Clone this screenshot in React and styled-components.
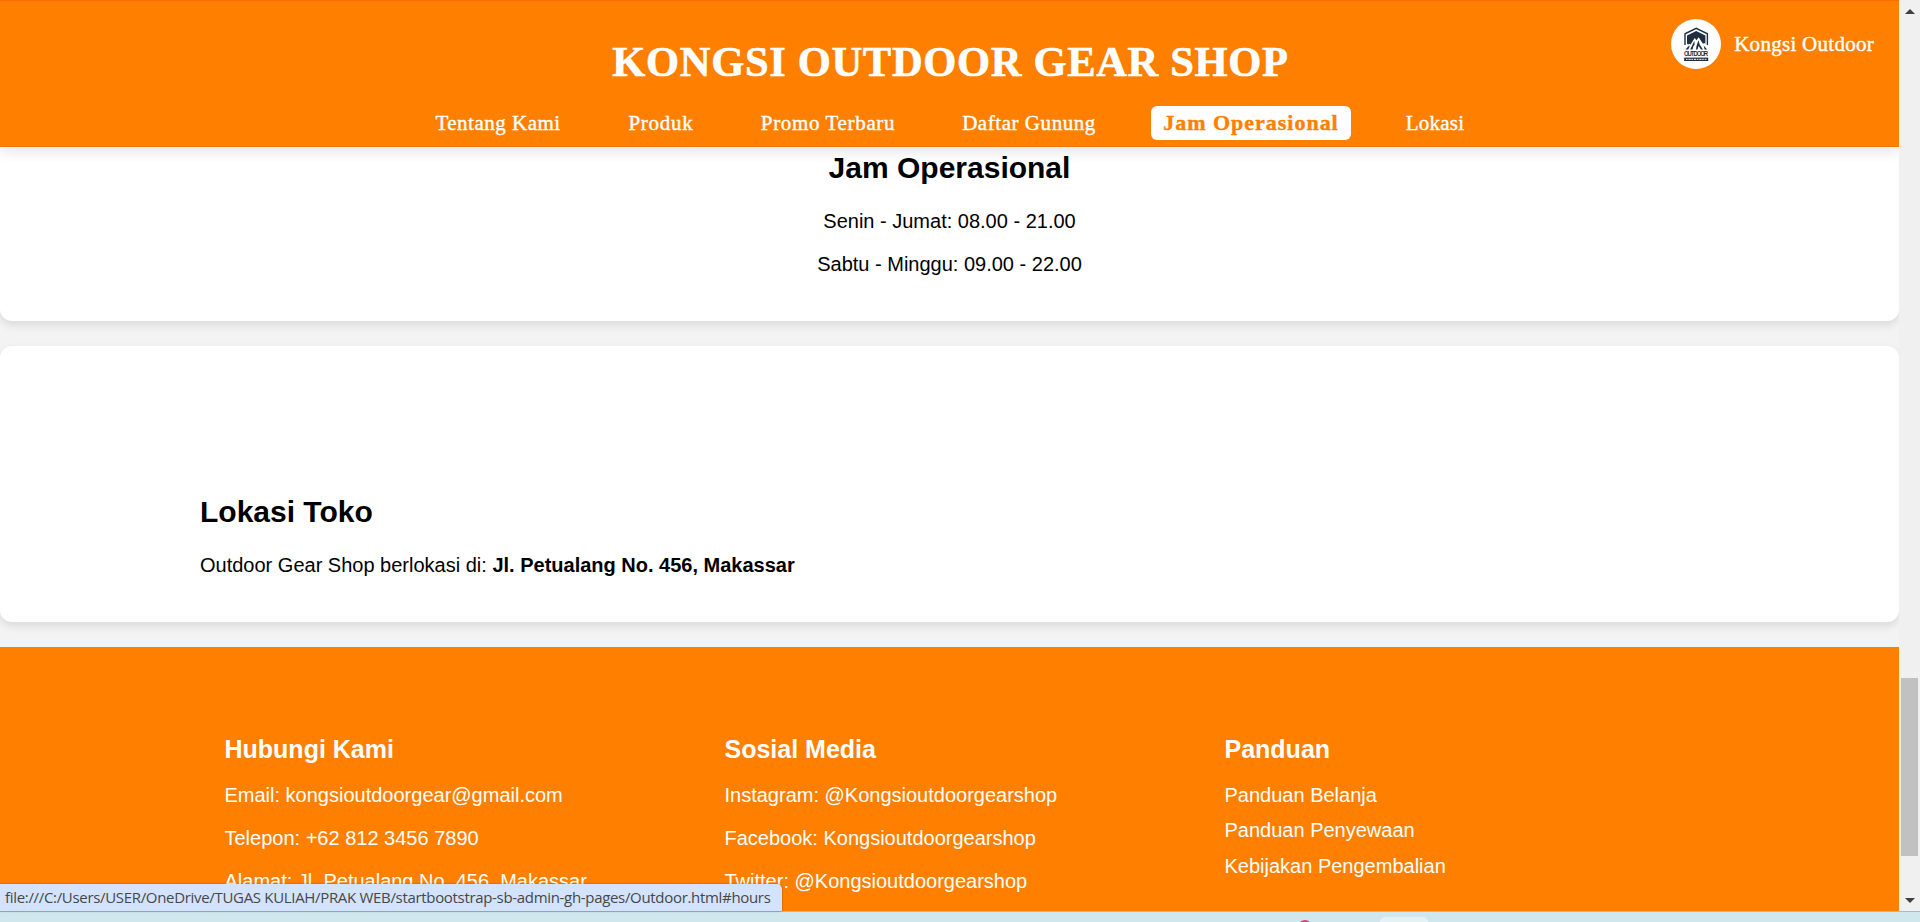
import React from "react";
import styled, { createGlobalStyle } from "styled-components";

const GlobalStyle = createGlobalStyle`
  * { box-sizing: border-box; margin: 0; padding: 0; }
  body { background: #f3f3f3; font-family: "Liberation Sans", Arial, sans-serif; overflow: hidden; }
`;

const Screen = styled.div`
  width: 1920px;
  height: 922px;
  display: flex;
  flex-direction: column;
  overflow: hidden;
`;

const Viewport = styled.div`
  position: relative;
  display: flex;
  height: 911px;
  flex: none;
`;

const Page = styled.div`
  width: 1899px;
  height: 911px;
  overflow: hidden;
  display: flex;
  flex-direction: column;
  background: #f3f3f3;
  color: #000;
  font-size: 20px;
  line-height: 23px;
`;

const Header = styled.header`
  position: relative;
  z-index: 1;
  flex: none;
  height: 147px;
  background: #ff8000;
  border-top: 1px solid #ff6a00;
  border-bottom: 1px solid #f57600;
  box-shadow: 0 5px 12px rgba(0, 0, 0, 0.1);
  color: #fff;
  font-family: Georgia, "Liberation Serif", serif;
  display: flex;
  flex-direction: column;
  align-items: center;
`;

const Title = styled.h1`
  margin-top: 37px;
  padding-left: 2px;
  font-size: 42.5px;
  line-height: 48px;
  letter-spacing: 0.68px;
  white-space: nowrap;
  -webkit-text-stroke: 0.6px currentColor;
`;

const Nav = styled.nav`
  display: flex;
  gap: 43px;
  margin-top: 20px;
`;

const NavLink = styled.a`
  width: ${(p) => p.$width}px;
  height: 34px;
  border-radius: 6px;
  text-align: center;
  white-space: nowrap;
  font-size: ${(p) => (p.$active ? 22 : 21)}px;
  line-height: 34px;
  letter-spacing: ${(p) => p.$tracking}px;
  font-weight: ${(p) => (p.$active ? 700 : 400)};
  background: ${(p) => (p.$active ? "#fff" : "transparent")};
  color: ${(p) => (p.$active ? "#ff8000" : "#fff")};
  -webkit-text-stroke: 0.4px currentColor;
`;

const Account = styled.div`
  position: absolute;
  top: 18px;
  right: 25px;
  display: flex;
  align-items: center;
  gap: 13px;
  font-size: 21px;
  letter-spacing: 0.28px;
  white-space: nowrap;
  -webkit-text-stroke: 0.4px currentColor;
`;

const Avatar = styled.span`
  width: 50px;
  height: 50px;
  border-radius: 50%;
  background: #fff;
  letter-spacing: 0;
  line-height: 0;
  -webkit-text-stroke: 0;
`;

const Card = styled.section`
  flex: none;
  background: #fff;
  box-shadow: 0 4px 8px rgba(0, 0, 0, 0.1);
  padding: ${(p) => p.$top}px 200px 45px;
  border-radius: ${(p) => (p.$cut ? "0 0 12px 12px" : "12px")};
  text-align: ${(p) => (p.$center ? "center" : "left")};
  margin-bottom: 25px;
`;

const Heading = styled.h2`
  font-size: 30px;
  line-height: 34px;
  margin-bottom: 25px;
`;

const Text = styled.p`
  & + & { margin-top: 20px; }
`;

const Footer = styled.footer`
  flex: 1;
  background: #ff8000;
  color: #fff;
  padding: 88px 0 0 224.5px;
  display: grid;
  grid-template-columns: repeat(3, 500px);
`;

const FooterTitle = styled.h3`
  font-size: 25px;
  line-height: 28px;
  margin-bottom: 21px;
`;

const LinkList = styled.ul`
  list-style: none;
`;

const LinkItem = styled.li`
  height: 35.4px;
`;

const Scrollbar = styled.div`
  width: 21px;
  background: #f0f0f0;
  display: flex;
  flex-direction: column;
  align-items: center;
  padding: 9px 0;
`;

const Arrow = styled.svg`
  display: block;
  flex: none;
  width: 10px;
  height: 5px;
`;

const Thumb = styled.div`
  width: 17px;
  height: 178px;
  margin: 664px 0 42px;
  background: #c1c1c1;
  flex: none;
`;

const StatusBubble = styled.div`
  position: absolute;
  left: 0;
  bottom: 0;
  width: 782px;
  height: 27px;
  padding-left: 5px;
  border-top-right-radius: 5px;
  background: #d3e3fd;
  box-shadow: 0 0 2px rgba(0, 0, 0, 0.45);
  color: #474747;
  font: 15px/26px "Open Sans", sans-serif;
  letter-spacing: -0.32px;
  white-space: nowrap;
`;

const Taskbar = styled.div`
  height: 11px;
  background: #cfe7ed;
  border-top: 1px solid #a9bac2;
  display: flex;
  padding-left: 1298px;
`;

const TaskIcon = styled.span`
  width: 14px;
  height: 14px;
  margin-top: 8px;
  border-radius: 50%;
  background: #d6457c;
`;

const TaskTile = styled.span`
  width: 48px;
  height: 20px;
  margin: 5px 0 0 68px;
  border-radius: 5px;
  background: #e4f2f5;
`;

const links = [
  { label: "Tentang Kami", width: 150, tracking: 0.5 },
  { label: "Produk", width: 90, tracking: 0.75 },
  { label: "Promo Terbaru", width: 158, tracking: 0.65 },
  { label: "Daftar Gunung", width: 158, tracking: 0.55 },
  { label: "Jam Operasional", width: 200, tracking: 0.98, active: true },
  { label: "Lokasi", width: 82, tracking: 0.2 },
];

function Logo() {
  return (
    <svg width="50" height="50" viewBox="0 0 50 50">
      <path d="M14 26V14.8L25.2 9.4 36.4 14.8V26" fill="none" stroke="#1f2f40" strokeWidth="1.4" />
      <path d="M16 24.5V16.4l9.2-4.3 9.2 4.3v8.1l-2.4 2H18z" fill="#1f2f40" />
      <path d="M12.5 31.2L18 24.8l1.6.6 4-6.4 2 2.2 2-3 4.4 6.6 1.5-.8 4.5 7.2z" fill="#fff" />
      <path d="M14.4 30.4l3.8-4 .4 1.2-1.4 2.8zM19.2 30.4l4.2-8.6.2 4-1.2 1.4-.8 3.2zM25 30.4l.4-3.2 2-6 1.4 4.6 3.2 4.6h-2l-2.4-3.4-1.2 3.4zM32.6 26.6l3.6 3.8h-2.6z" fill="#1f2f40" />
      <text x="13" y="37" textLength="24.2" lengthAdjust="spacing" fontFamily="Liberation Sans Narrow, Liberation Sans, sans-serif" fontWeight="700" fontSize="6" fill="#1f2f40" transform="translate(0 -9.25) scale(1 1.25)">OUTDOOR</text>
      <rect x="13.2" y="38.6" width="24" height="3.4" fill="#1f2f40" />
      <path d="M15 40.3h20.4" stroke="#fff" strokeWidth="1" strokeDasharray="1.6 .8 2.3 .7" />
    </svg>
  );
}

export default function App() {
  return (
    <Screen>
      <GlobalStyle />
      <Viewport>
        <Page>
          <Header>
            <Title>KONGSI OUTDOOR GEAR SHOP</Title>
            <Nav>
              {links.map((l) => (
                <NavLink key={l.label} $width={l.width} $tracking={l.tracking} $active={l.active}>
                  {l.label}
                </NavLink>
              ))}
            </Nav>
            <Account>
              <Avatar><Logo /></Avatar>
              Kongsi Outdoor
            </Account>
          </Header>
          <Card $top={4} $center $cut>
            <Heading>Jam Operasional</Heading>
            <Text>Senin - Jumat: 08.00 - 21.00</Text>
            <Text>Sabtu - Minggu: 09.00 - 22.00</Text>
          </Card>
          <Card $top={149}>
            <Heading>Lokasi Toko</Heading>
            <Text>Outdoor Gear Shop berlokasi di: <b>Jl. Petualang No. 456, Makassar</b></Text>
          </Card>
          <Footer>
            <div>
              <FooterTitle>Hubungi Kami</FooterTitle>
              <Text>Email: kongsioutdoorgear@gmail.com</Text>
              <Text>Telepon: +62 812 3456 7890</Text>
              <Text>Alamat: Jl. Petualang No. 456, Makassar</Text>
            </div>
            <div>
              <FooterTitle>Sosial Media</FooterTitle>
              <Text>Instagram: @Kongsioutdoorgearshop</Text>
              <Text>Facebook: Kongsioutdoorgearshop</Text>
              <Text>Twitter: @Kongsioutdoorgearshop</Text>
            </div>
            <div>
              <FooterTitle>Panduan</FooterTitle>
              <LinkList>
                <LinkItem>Panduan Belanja</LinkItem>
                <LinkItem>Panduan Penyewaan</LinkItem>
                <LinkItem>Kebijakan Pengembalian</LinkItem>
              </LinkList>
            </div>
          </Footer>
        </Page>
        <Scrollbar>
          <Arrow viewBox="0 0 10 5"><path d="M0 5L5 0l5 5z" fill="#404040" /></Arrow>
          <Thumb />
          <Arrow viewBox="0 0 10 5"><path d="M0 0h10L5 5z" fill="#404040" /></Arrow>
        </Scrollbar>
        <StatusBubble>
          file:///C:/Users/USER/OneDrive/TUGAS KULIAH/PRAK WEB/startbootstrap-sb-admin-gh-pages/Outdoor.html#hours
        </StatusBubble>
      </Viewport>
      <Taskbar>
        <TaskIcon />
        <TaskTile />
      </Taskbar>
    </Screen>
  );
}
